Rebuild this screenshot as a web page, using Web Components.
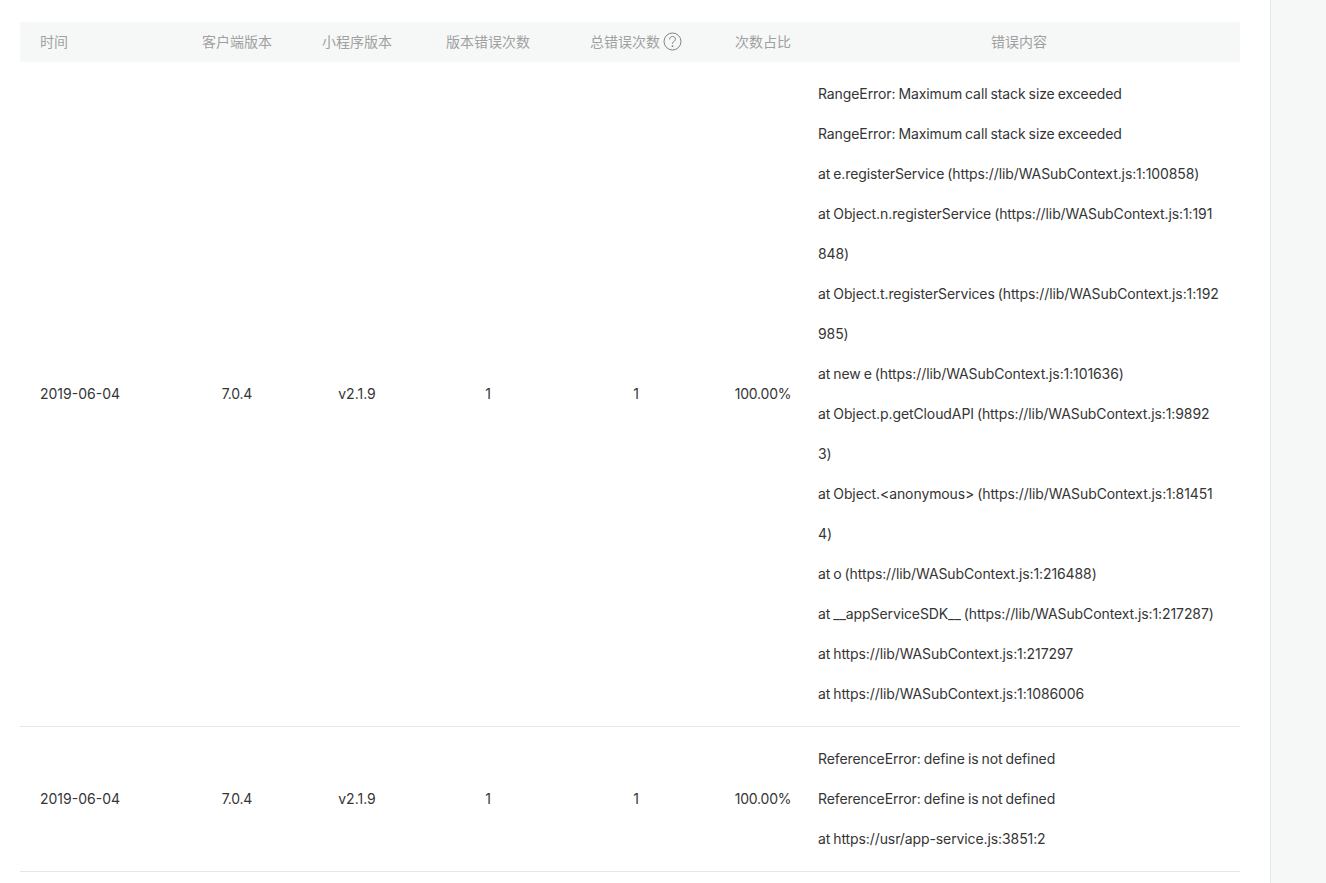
<!DOCTYPE html>
<html>
<head>
<meta charset="utf-8">
<style>
  html, body { margin: 0; height: 100%; overflow: hidden; background: #fff; }
  body { font-family: Inter, "Noto Sans CJK SC", sans-serif; font-size: 14px; color: #353535; }
</style>
</head>
<body>
<error-page>
  <error-table>
    <error-row date="2019-06-04" client="7.0.4" version="v2.1.9" count="1" total="1" ratio="100.00%">
      <p>RangeError: Maximum call stack size exceeded</p>
      <p>RangeError: Maximum call stack size exceeded</p>
      <p>at e.registerService (https://lib/WASubContext.js:1:100858)</p>
      <p>at Object.n.registerService (https://lib/WASubContext.js:1:191848)</p>
      <p>at Object.t.registerServices (https://lib/WASubContext.js:1:192985)</p>
      <p>at new e (https://lib/WASubContext.js:1:101636)</p>
      <p>at Object.p.getCloudAPI (https://lib/WASubContext.js:1:98923)</p>
      <p>at Object.&lt;anonymous&gt; (https://lib/WASubContext.js:1:814514)</p>
      <p>at o (https://lib/WASubContext.js:1:216488)</p>
      <p>at __appServiceSDK__ (https://lib/WASubContext.js:1:217287)</p>
      <p>at https://lib/WASubContext.js:1:217297</p>
      <p>at https://lib/WASubContext.js:1:1086006</p>
    </error-row>
    <error-row date="2019-06-04" client="7.0.4" version="v2.1.9" count="1" total="1" ratio="100.00%">
      <p>ReferenceError: define is not defined</p>
      <p>ReferenceError: define is not defined</p>
      <p>at https://usr/app-service.js:3851:2</p>
    </error-row>
  </error-table>
</error-page>
<script>
const COLUMNS = "172px 90px 150px 112px 184px 70px 442px";

class ErrorPage extends HTMLElement {
  constructor() {
    super();
    const el = this.attachShadow({ mode: "open" });
    el.innerHTML = `
      <style>
        :host { display: flex; height: 883px; }
        .main { flex: 1; padding: 22px 30px 0 20px; min-width: 0; }
        .side { width: 55px; background: #f6f8f8; border-left: 1px solid #e7e7e7; }
      </style>
      <div class="main"><slot></slot></div>
      <div class="side"></div>
    `;
  }
}
customElements.define("error-page", ErrorPage);

class ErrorTable extends HTMLElement {
  constructor() {
    super();
    const el = this.attachShadow({ mode: "open" });
    el.innerHTML = `
      <style>
        :host { display: block; }
        .head {
          display: grid;
          grid-template-columns: ${COLUMNS};
          box-sizing: border-box;
          height: 40px;
          padding-bottom: 2px;
          align-items: center;
          background: #f6f8f8;
          color: #a0a0a0;
          text-align: center;
        }
        .head div:first-child { text-align: left; padding-left: 20px; }
        .tip { display: inline-flex; align-items: center; gap: 3px; }
        svg { display: block; margin-top: 1px; }
      </style>
      <div class="head">
        <div>时间</div>
        <div>客户端版本</div>
        <div>小程序版本</div>
        <div>版本错误次数</div>
        <div><span class="tip">总错误次数
          <svg width="19" height="19" viewBox="0 0 19 19" fill="none" stroke="#808080">
            <circle cx="9.5" cy="9.5" r="8.5"/>
            <path d="M6.6 7.4c0-1.7 1.3-2.9 3-2.9s2.8 1.1 2.8 2.6c0 1.1-.6 1.7-1.5 2.4-.9.6-1.4 1.1-1.4 2.3"/>
            <circle cx="9.5" cy="14.2" r=".9" fill="#808080" stroke="none"/>
          </svg></span></div>
        <div>次数占比</div>
        <div>错误内容</div>
      </div>
      <slot></slot>
    `;
  }
}
customElements.define("error-table", ErrorTable);

class ErrorRow extends HTMLElement {
  constructor() {
    super();
    const el = this.attachShadow({ mode: "open" });
    const a = (n) => this.getAttribute(n);
    el.innerHTML = `
      <style>
        :host {
          display: grid;
          grid-template-columns: ${COLUMNS};
          align-items: center;
          text-align: center;
          border-bottom: 1px solid #e7e7e7;
          color: #353535;
        }
        .cell { padding-bottom: 1px; }
        .tight { letter-spacing: -0.2px; }
        .date { text-align: left; padding-left: 20px; }
        .msg {
          padding: 12px 20px;
          text-align: left;
          line-height: 40px;
          word-break: break-all;
          letter-spacing: -0.1px;
          word-spacing: -0.8px;
        }
        ::slotted(p) { margin: 0; }
      </style>
      <div class="cell date">${a("date")}</div>
      <div class="cell tight">${a("client")}</div>
      <div class="cell">${a("version")}</div>
      <div class="cell">${a("count")}</div>
      <div class="cell">${a("total")}</div>
      <div class="cell tight">${a("ratio")}</div>
      <div class="msg"><slot></slot></div>
    `;
  }
}
customElements.define("error-row", ErrorRow);
</script>
</body>
</html>
